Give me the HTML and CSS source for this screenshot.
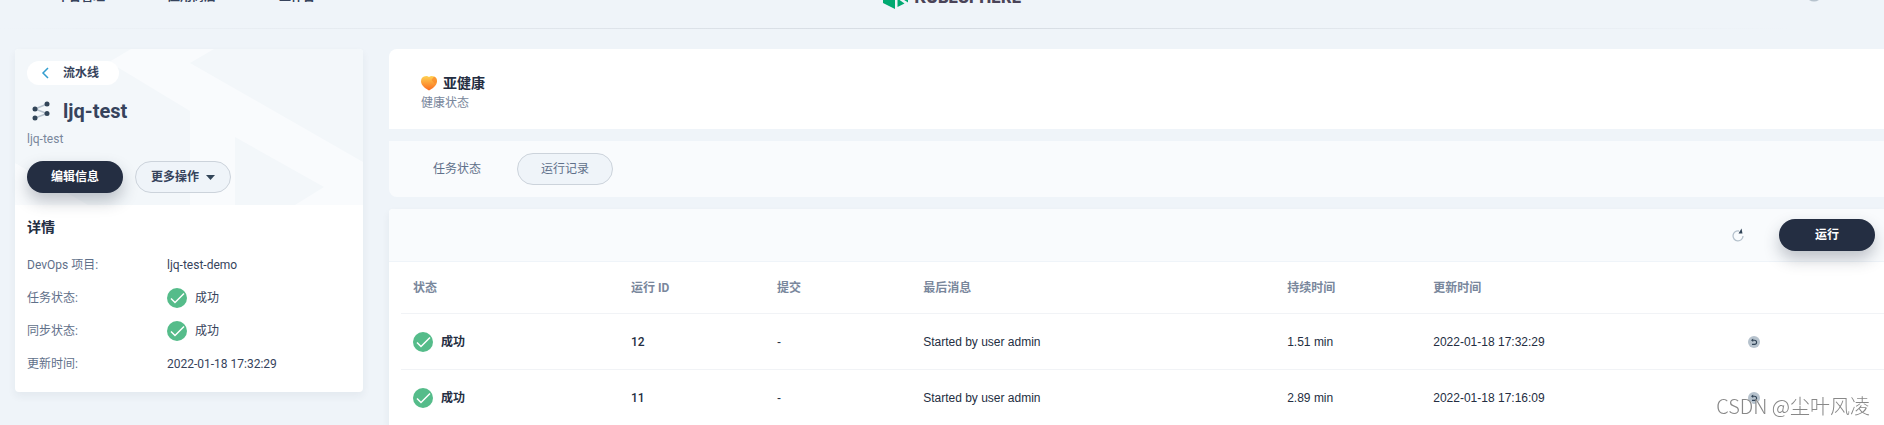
FILE: index.html
```html
<!DOCTYPE html>
<html lang="zh-CN">
<head>
    <meta charset="UTF-8">
    <meta name="viewport" content="width=device-width, initial-scale=1">
    <title>ljq-test</title>
    <link rel="stylesheet" href="styles.css">
</head>
<body>
    <!-- shared icons -->
    <svg class="sprite" width="0" height="0">
        <symbol id="check" viewBox="0 0 20 20">
            <circle cx="10" cy="10" r="10" fill="#55bc8a"/>
            <path d="M4 10.5l4 4 9-9" fill="none" stroke="#fff" stroke-width="1.5"/>
        </symbol>
        <symbol id="replay" viewBox="0 0 12 12">
            <circle cx="6" cy="6" r="6" fill="#b6c2cd"/>
            <path d="M4.500 4.200h2a2.100 2.100 0 0 1 0 4.200H4" fill="none" stroke="#324558" stroke-width="1.100"/>
            <path d="M5.200 2.500v3.400L3 4.200z" fill="#324558"/>
        </symbol>
    </svg>

    <header class="header">
        <nav class="nav">
            <a href="#">平台管理</a>
            <a href="#">应用商店</a>
            <a href="#">工作台</a>
        </nav>
        <a class="logo" href="#">
            <svg width="26" height="24" viewBox="0 0 26 24">
                <path d="M12 0v24L0 18V6z" fill="#00a971"/>
                <path d="M14.500 13.500L21.500 18.500 14.500 22z" fill="#00a971"/>
                <path d="M14.500 0L25 6v11.500L15 11z" fill="#00a971"/>
            </svg>
            <span>KUBESPHERE</span>
        </a>
        <button class="user" type="button" aria-label="admin">
            <svg width="16" height="16" viewBox="0 0 16 16">
                <circle cx="8" cy="2" r="3" fill="#324558"/>
                <path d="M3 8h10v3q-5 3-10 0z" fill="#b6c2cd"/>
            </svg>
        </button>
    </header>

    <div class="layout">
        <aside class="sidebar">
            <div class="summary">
                <svg class="pattern" viewBox="0 0 348 156" preserveAspectRatio="xMinYMin slice">
                    <path d="M116 0L94 13l81 49v94h45V88l89 50-29 18h68v-43L175 14l24-14z" fill="#f9fbfd"/>
                    <path d="M0 114l73 42H0z" fill="#f9fbfd"/>
                </svg>
                <a class="back" href="#">
                    <svg width="12" height="12" viewBox="0 0 12 12">
                        <path d="M9 1L4 6l5 5" fill="none" stroke="#329dce" stroke-width="1.5"/>
                    </svg>
                    流水线
                </a>
                <h1 class="name">
                    <svg width="28" height="28" viewBox="0 0 28 28">
                        <path d="M20 7L8 12l12 4.500L8 21" fill="none" stroke="#b6c2cd" stroke-width="1.5"/>
                        <g fill="#324558">
                            <circle cx="20" cy="7" r="2.500"/>
                            <circle cx="8" cy="12" r="2.500"/>
                            <circle cx="20" cy="16.500" r="2.500"/>
                            <circle cx="8" cy="21" r="2.500"/>
                        </g>
                    </svg>
                    ljq-test
                </h1>
                <p class="desc">ljq-test</p>
                <div class="actions">
                    <button class="btn btn-dark" type="button">编辑信息</button>
                    <button class="btn btn-line" type="button">
                        更多操作
                        <svg width="9" height="5" viewBox="0 0 9 5"><path d="M0 0h9L4.500 5z" fill="#324558"/></svg>
                    </button>
                </div>
            </div>
            <div class="details">
                <h2>详情</h2>
                <dl>
                    <div class="item"><dt>DevOps 项目:</dt><dd>ljq-test-demo</dd></div>
                    <div class="item"><dt>任务状态:</dt><dd><svg width="20" height="20"><use href="#check"/></svg>成功</dd></div>
                    <div class="item"><dt>同步状态:</dt><dd><svg width="20" height="20"><use href="#check"/></svg>成功</dd></div>
                    <div class="item"><dt>更新时间:</dt><dd>2022-01-18 17:32:29</dd></div>
                </dl>
            </div>
        </aside>

        <main class="main">
            <section class="health">
                <div class="health-title">
                    <svg width="16" height="16" viewBox="0 0 16 16">
                        <defs>
                            <linearGradient id="heat" x1="0" y1="0" x2="0" y2="1">
                                <stop offset="0" stop-color="#ffd152"/>
                                <stop offset="1" stop-color="#fa6b1e"/>
                            </linearGradient>
                        </defs>
                        <path d="M8 2Q10 .5 13 1.500 16 2.500 16 6.500 16 9.500 12 13L8 15.500 4 13Q0 9.500 0 6.500 0 2.500 3 1.500 6 .5 8 2z" fill="url(#heat)"/>
                        <path d="M10.500 5L13 1.500q3 1 3 5l-2 2.500z" fill="#f9882b" opacity=".7"/>
                    </svg>
                    亚健康
                </div>
                <p>健康状态</p>
            </section>

            <nav class="tabs">
                <a href="#">任务状态</a>
                <a class="active" href="#">运行记录</a>
            </nav>

            <section class="records">
                <div class="toolbar">
                    <button class="refresh" type="button" aria-label="刷新">
                        <svg width="14" height="14" viewBox="0 0 14 14">
                            <path d="M8 3A5 5 0 1 0 12 8" fill="none" stroke="#b6c2cd" stroke-width="1.3"/>
                            <path d="M10.500 0.500L11.500 5.500H7.500z" fill="#324558"/>
                        </svg>
                    </button>
                    <button class="btn btn-dark" type="button">运行</button>
                </div>
                <table>
                    <colgroup>
                        <col class="col-status"><col class="col-small"><col class="col-small"><col class="col-message"><col class="col-small"><col class="col-time"><col>
                    </colgroup>
                    <thead>
                        <tr>
                            <th>状态</th>
                            <th>运行 ID</th>
                            <th>提交</th>
                            <th>最后消息</th>
                            <th>持续时间</th>
                            <th>更新时间</th>
                            <th></th>
                        </tr>
                    </thead>
                    <tbody>
                        <tr>
                            <td><span class="status"><svg width="20" height="20"><use href="#check"/></svg>成功</span></td>
                            <td class="run-id">12</td>
                            <td>-</td>
                            <td>Started by user admin</td>
                            <td>1.51 min</td>
                            <td>2022-01-18 17:32:29</td>
                            <td><button class="replay" type="button" aria-label="重新运行"><svg width="12" height="12"><use href="#replay"/></svg></button></td>
                        </tr>
                        <tr>
                            <td><span class="status"><svg width="20" height="20"><use href="#check"/></svg>成功</span></td>
                            <td class="run-id">11</td>
                            <td>-</td>
                            <td>Started by user admin</td>
                            <td>2.89 min</td>
                            <td>2022-01-18 17:16:09</td>
                            <td><button class="replay" type="button" aria-label="重新运行"><svg width="12" height="12"><use href="#replay"/></svg></button></td>
                        </tr>
                    </tbody>
                </table>
            </section>
        </main>
    </div>

    <div class="watermark">CSDN @尘叶风凌</div>
</body>
</html>
```

FILE: styles.css
```css
* {
    box-sizing: border-box;
    margin: 0;
    padding: 0;
}

body {
    background: #eff4f9;
    color: #242e42;
    font-family: Roboto, "Noto Sans CJK SC", sans-serif;
    font-size: 12px;
    line-height: 20px;
    overflow: hidden;
}

a {
    color: inherit;
    text-decoration: none;
}

button {
    border: 0;
    background: none;
    font: inherit;
    cursor: pointer;
}

svg {
    display: block;
    flex: none;
}

.sprite {
    position: absolute;
}

/* header, scrolled part of the way out of view */
.header {
    display: grid;
    grid-template-columns: 1fr auto 1fr;
    align-items: center;
    height: 69px;
    margin-top: -40px;
    padding: 5px 37px 0 57px;
    border-bottom: 1px solid;
    border-image: linear-gradient(to right, #eff4f9, #d5dbe2 50%, #eff4f9 95%) 1;
}

.nav {
    display: flex;
    gap: 63px;
    color: #36435c;
    font-weight: 700;
}

.logo {
    display: flex;
    align-items: center;
    gap: 6px;
    color: #4a4458;
    font-family: Inter, sans-serif;
    font-size: 16px;
    font-weight: 800;
}

.user {
    justify-self: end;
    margin-right: 25px;
}

.layout {
    display: flex;
    align-items: flex-start;
    gap: 26px;
    padding: 20px 0 0 15px;
}

/* sidebar */
.sidebar {
    flex: none;
    width: 348px;
    border-radius: 4px;
    background: #fff;
    box-shadow: 0 4px 8px rgba(36, 46, 66, 0.06);
}

.summary {
    position: relative;
    padding: 12px;
    border-radius: 4px 4px 0 0;
    background: #f3f7fa;
}

.pattern {
    position: absolute;
    top: 0;
    left: 0;
    width: 100%;
    height: 100%;
}

.back,
.name,
.desc,
.actions {
    position: relative;
}

.back {
    display: inline-flex;
    align-items: center;
    gap: 12px;
    height: 24px;
    padding: 0 20px 0 12px;
    border-radius: 12px;
    background: #fff;
    color: #36435c;
    font-weight: 700;
}

.name {
    display: flex;
    align-items: center;
    gap: 8px;
    margin-top: 12px;
    color: #36435c;
    font-size: 20px;
    font-weight: 700;
    line-height: 28px;
}

.desc {
    margin-top: 4px;
    color: #79879c;
}

.actions {
    display: flex;
    gap: 12px;
    margin-top: 12px;
}

.btn {
    display: flex;
    align-items: center;
    justify-content: center;
    gap: 7px;
    width: 96px;
    height: 32px;
    border-radius: 16px;
    font-weight: 700;
}

.btn-dark {
    background: #242e42;
    color: #fff;
    box-shadow: 0 8px 16px rgba(36, 46, 66, 0.28);
}

.btn-line {
    border: 1px solid #ccd3db;
    background: #eff4f9;
    color: #36435c;
}

.details {
    padding: 12px;
}

.details h2 {
    font-size: 14px;
    font-weight: 700;
}

.details dl {
    display: flex;
    flex-direction: column;
    gap: 13px;
    margin-top: 18px;
    padding-bottom: 6px;
}

.item {
    display: flex;
}

.item dt {
    width: 140px;
    color: #5f708a;
}

.item dd {
    display: flex;
    gap: 8px;
    color: #36435c;
}

/* main column */
.main {
    flex: 1;
    min-width: 0;
}

.health {
    height: 80px;
    padding: 24px 32px;
    border-radius: 8px 0 0 0;
    background: #fff;
}

.health-title {
    display: flex;
    align-items: center;
    gap: 6px;
    font-size: 14px;
    font-weight: 700;
}

.health p {
    color: #79879c;
}

.tabs {
    display: flex;
    margin-top: 12px;
    padding: 12px 32px;
    border-radius: 0 0 0 8px;
    background: #f9fbfd;
    color: #5f708a;
}

.tabs a {
    width: 72px;
    line-height: 32px;
    text-align: center;
}

.tabs .active {
    width: 96px;
    margin-left: 24px;
    border: 1px solid #ccd3db;
    border-radius: 16px;
    background: #eff4f9;
    line-height: 30px;
}

.records {
    margin-top: 12px;
    padding-left: 12px;
    border-radius: 4px 0 0 0;
    background: #fff;
    box-shadow: 0 4px 8px rgba(36, 46, 66, 0.06);
}

.toolbar {
    display: flex;
    align-items: center;
    justify-content: flex-end;
    gap: 34px;
    height: 53px;
    margin-left: -12px;
    padding-right: 9px;
    border-bottom: 1px solid #eff4f9;
    border-radius: 4px 0 0 0;
    background: #f9fbfd;
}

table {
    width: 100%;
    border-collapse: separate;
    border-spacing: 0;
    table-layout: fixed;
}

.col-status {
    width: 14.7%;
}

.col-small {
    width: 9.85%;
}

.col-message {
    width: 24.55%;
}

.col-time {
    width: 21.2%;
}

th,
td {
    height: 56px;
    padding: 0 12px;
    border-bottom: 1px solid #f1f3f6;
    text-align: left;
    vertical-align: middle;
}

th {
    height: 52px;
    color: #79879c;
    font-weight: 700;
}

td {
    font-family: "Liberation Sans", "Noto Sans CJK SC", sans-serif;
}

.status {
    display: flex;
    align-items: center;
    gap: 8px;
    font-weight: 700;
}

.run-id {
    font-family: Roboto, sans-serif;
    font-weight: 500;
}

.replay {
    display: block;
}

.watermark {
    position: fixed;
    right: 14px;
    bottom: 5px;
    color: #888;
    font-family: "Noto Sans CJK SC", sans-serif;
    font-size: 20px;
    font-weight: 300;
    line-height: 28px;
    text-shadow: 1px 1px 0 #fff;
}
```
